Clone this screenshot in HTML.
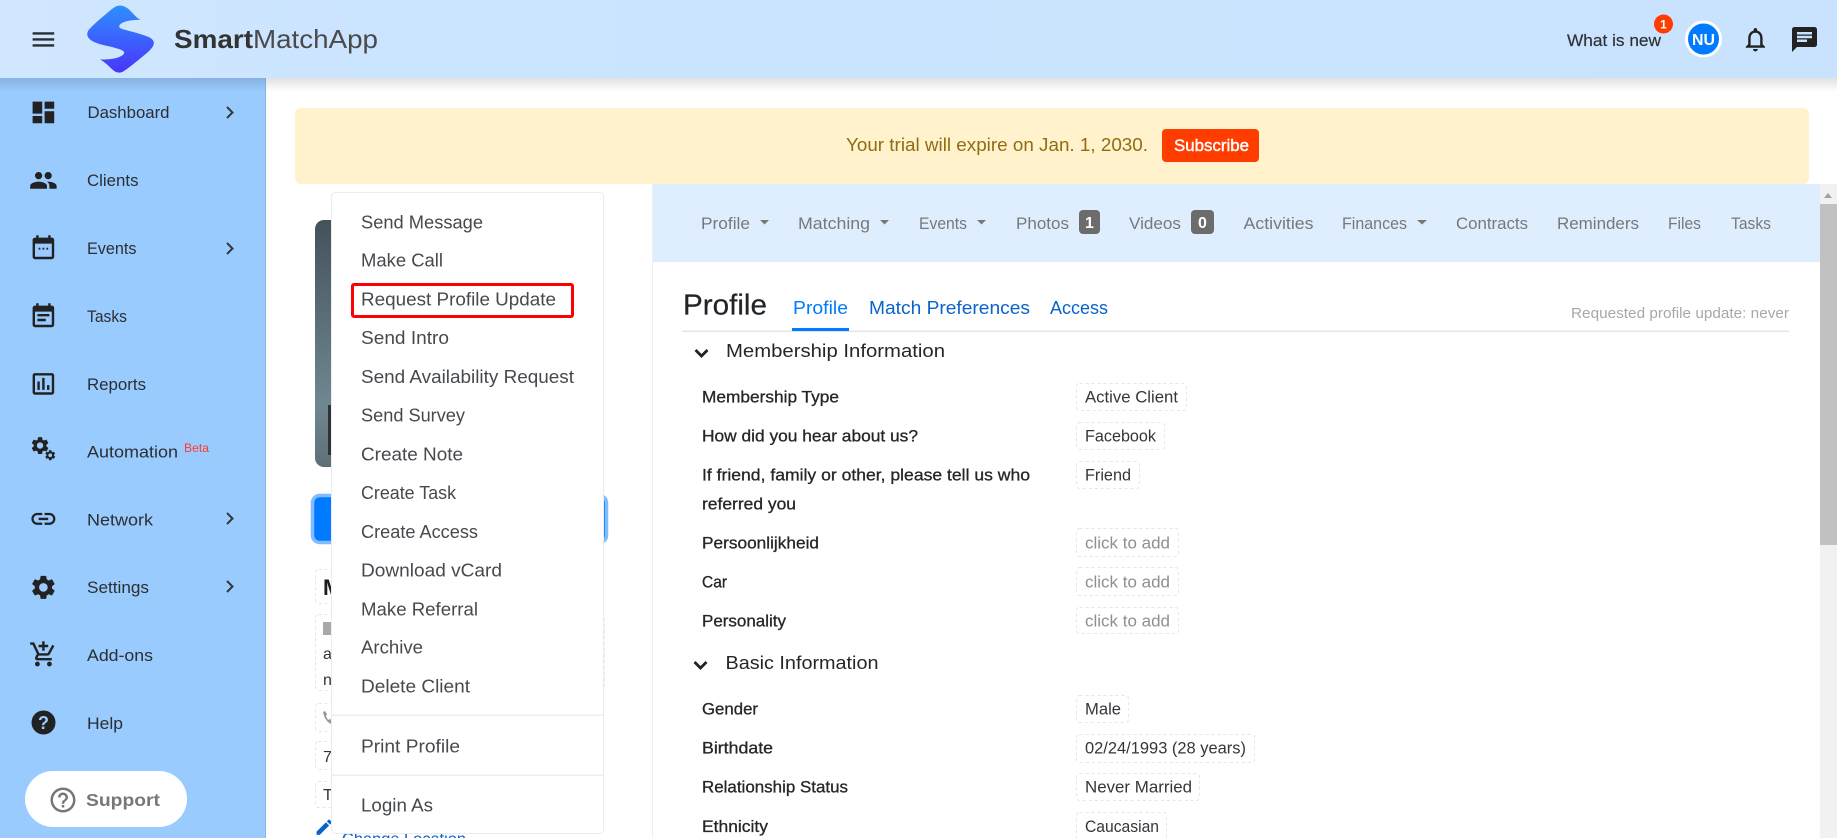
<!DOCTYPE html>
<html lang="en"><head><meta charset="utf-8"><title>SmartMatchApp</title>
<style>
html,body{margin:0;padding:0;background:#fff;overflow:hidden}
svg{display:block}
text{font-family:"Liberation Sans",sans-serif}
.s{font-size:17px;fill:#2b2f33}
.m{font-size:18.5px;fill:#464a4e}
.n{font-size:17px;fill:#787878}
.l{font-size:16.5px;fill:#24272a;stroke:#24272a;stroke-width:.3px}
.v{font-size:16.5px;fill:#33373b}
.c{font-size:16.5px;fill:#8f8f8f}
.i{fill:#222}
.b{fill:#fff;stroke:#e6e6e6;stroke-dasharray:3 3}
</style></head><body>
<svg xmlns="http://www.w3.org/2000/svg" width="1837" height="838" viewBox="0 0 1837 838">
<defs>
<linearGradient id="hd" x1="0" x2="1" y1="0" y2="0"><stop offset="0" stop-color="#d1e7ff"/><stop offset=".2" stop-color="#cbe4ff"/><stop offset="1" stop-color="#c9e3fe"/></linearGradient>
<linearGradient id="sh" x1="0" x2="0" y1="0" y2="1"><stop offset="0" stop-color="#000" stop-opacity=".12"/><stop offset="1" stop-color="#000" stop-opacity="0"/></linearGradient>
<linearGradient id="lg" x1="0" x2="0" y1="0" y2="1"><stop offset="0" stop-color="#2d90ff"/><stop offset="1" stop-color="#4a35fb"/></linearGradient>
<linearGradient id="ph" x1="0" x2="0" y1="0" y2="1"><stop offset="0" stop-color="#44525a"/><stop offset=".75" stop-color="#6f8791"/><stop offset="1" stop-color="#5f6f76"/></linearGradient>
<path id="gear" d="M19.14 12.94c.04-.3.06-.61.06-.94 0-.32-.02-.64-.07-.94l2.03-1.58c.18-.14.23-.41.12-.61l-1.92-3.32c-.12-.22-.37-.29-.59-.22l-2.39.96c-.5-.38-1.03-.7-1.62-.94l-.36-2.54c-.04-.24-.24-.41-.48-.41h-3.84c-.24 0-.43.17-.47.41l-.36 2.54c-.59.24-1.13.57-1.62.94l-2.39-.96c-.22-.08-.47 0-.59.22L2.74 8.87c-.12.21-.08.47.12.61l2.03 1.58c-.05.3-.09.63-.09.94s.02.64.07.94l-2.03 1.58c-.18.14-.23.41-.12.61l1.92 3.32c.12.22.37.29.59.22l2.39-.96c.5.38 1.03.7 1.62.94l.36 2.54c.05.24.24.41.48.41h3.84c.24 0 .44-.17.47-.41l.36-2.54c.59-.24 1.13-.56 1.62-.94l2.39.96c.22.08.47 0 .59-.22l1.92-3.32c.12-.22.07-.47-.12-.61l-2.01-1.58zM12 15.6c-1.98 0-3.6-1.62-3.6-3.6s1.62-3.6 3.6-3.6 3.6 1.62 3.6 3.6-1.62 3.6-3.6 3.6z"/>
</defs>

<!-- page -->
<rect width="1837" height="838" fill="#fff"/>

<!-- banner -->
<rect x="295" y="108" width="1514" height="76" rx="6" fill="#fff2cc"/>
<text x="846" y="151" font-size="18.5" fill="#8f6d10" textLength="302" lengthAdjust="spacingAndGlyphs">Your trial will expire on Jan. 1, 2030.</text>
<rect x="1162" y="129" width="97" height="33" rx="4" fill="#ff3d00"/>
<text x="1174" y="151" font-size="16.5" fill="#fff" stroke="#fff" stroke-width=".4" textLength="75" lengthAdjust="spacingAndGlyphs">Subscribe</text>

<!-- right panel -->
<rect x="652" y="184" width="1" height="654" fill="#efefef"/>
<rect x="653" y="184" width="1167" height="78" fill="#deeeff"/>
<rect x="1820" y="184" width="17" height="654" fill="#f1f1f1"/>
<rect x="1820" y="204" width="17" height="341" fill="#c1c1c1"/>
<path d="M1824 198l4-5 4 5z" fill="#a3a3a3"/>

<text class="n" x="701" y="229" textLength="49" lengthAdjust="spacingAndGlyphs">Profile</text>
<path d="M760 220h9l-4.500 4.500z" fill="#787878"/>
<text class="n" x="798" y="229" textLength="72" lengthAdjust="spacingAndGlyphs">Matching</text>
<path d="M880 220h9l-4.500 4.500z" fill="#787878"/>
<text class="n" x="919" y="229" textLength="48" lengthAdjust="spacingAndGlyphs">Events</text>
<path d="M977 220h9l-4.500 4.500z" fill="#787878"/>
<text class="n" x="1016" y="229" textLength="53" lengthAdjust="spacingAndGlyphs">Photos</text>
<rect x="1079" y="210" width="21" height="24" rx="4" fill="#6c6c6c"/>
<text x="1085" y="228" font-size="16" font-weight="700" fill="#fff">1</text>
<text class="n" x="1129" y="229" textLength="52" lengthAdjust="spacingAndGlyphs">Videos</text>
<rect x="1191" y="210" width="23" height="24" rx="4" fill="#6c6c6c"/>
<text x="1198" y="228" font-size="16" font-weight="700" fill="#fff">0</text>
<text class="n" x="1243.500" y="229" textLength="70" lengthAdjust="spacingAndGlyphs">Activities</text>
<text class="n" x="1342" y="229" textLength="65" lengthAdjust="spacingAndGlyphs">Finances</text>
<path d="M1417 220h10l-5 4.500z" fill="#787878"/>
<text class="n" x="1456" y="229" textLength="72" lengthAdjust="spacingAndGlyphs">Contracts</text>
<text class="n" x="1557" y="229" textLength="82" lengthAdjust="spacingAndGlyphs">Reminders</text>
<text class="n" x="1668" y="229" textLength="33" lengthAdjust="spacingAndGlyphs">Files</text>
<text class="n" x="1731" y="229" textLength="40" lengthAdjust="spacingAndGlyphs">Tasks</text>

<text x="683" y="314.500" font-size="29" fill="#212529" stroke="#212529" stroke-width=".2" textLength="84" lengthAdjust="spacingAndGlyphs">Profile</text>
<text x="793" y="314" font-size="18.500" fill="#007bff" textLength="55" lengthAdjust="spacingAndGlyphs">Profile</text>
<text x="869" y="314" font-size="18.500" fill="#0a63c9" textLength="161" lengthAdjust="spacingAndGlyphs">Match Preferences</text>
<text x="1050" y="314" font-size="18.500" fill="#0a63c9" textLength="58" lengthAdjust="spacingAndGlyphs">Access</text>
<text x="1571" y="318" font-size="14.500" fill="#a8a8a8" textLength="218" lengthAdjust="spacingAndGlyphs">Requested profile update: never</text>
<rect x="682" y="330.500" width="1107" height="1.500" fill="#e4e4e4"/>
<rect x="792" y="328" width="57" height="3" fill="#007bff"/>

<path d="M695.500 350l6 6 6-6" fill="none" stroke="#222" stroke-width="2.800"/>
<text x="726" y="357" font-size="18.500" fill="#24272a" textLength="219" lengthAdjust="spacingAndGlyphs">Membership Information</text>

<text class="l" x="702" y="397" dy="5.500" textLength="137" lengthAdjust="spacingAndGlyphs">Membership Type</text>
<text class="l" x="702" y="436" dy="5.500" textLength="216" lengthAdjust="spacingAndGlyphs">How did you hear about us?</text>
<text class="l" x="702" y="475" dy="5.500" textLength="328" lengthAdjust="spacingAndGlyphs">If friend, family or other, please tell us who</text>
<text class="l" x="702" y="504" dy="5.500" textLength="94" lengthAdjust="spacingAndGlyphs">referred you</text>
<text class="l" x="702" y="543" dy="5.500" textLength="117" lengthAdjust="spacingAndGlyphs">Persoonlijkheid</text>
<text class="l" x="702" y="582" dy="5.500" textLength="25" lengthAdjust="spacingAndGlyphs">Car</text>
<text class="l" x="702" y="621" dy="5.500" textLength="84" lengthAdjust="spacingAndGlyphs">Personality</text>

<rect class="b" x="1076.500" y="383.500" width="110" height="27" rx="3"/>
<text class="v" x="1085" y="397" dy="5.500" textLength="93" lengthAdjust="spacingAndGlyphs">Active Client</text>
<rect class="b" x="1076.500" y="422.500" width="88" height="27" rx="3"/>
<text class="v" x="1085" y="436" dy="5.500" textLength="71" lengthAdjust="spacingAndGlyphs">Facebook</text>
<rect class="b" x="1076.500" y="461.500" width="63" height="27" rx="3"/>
<text class="v" x="1085" y="475" dy="5.500" textLength="46" lengthAdjust="spacingAndGlyphs">Friend</text>
<rect class="b" x="1076.500" y="528.500" width="102" height="28" rx="3"/>
<text class="c" x="1085" y="543" dy="5.500" textLength="85" lengthAdjust="spacingAndGlyphs">click to add</text>
<rect class="b" x="1076.500" y="567.500" width="102" height="28" rx="3"/>
<text class="c" x="1085" y="582" dy="5.500" textLength="85" lengthAdjust="spacingAndGlyphs">click to add</text>
<rect class="b" x="1076.500" y="607.500" width="102" height="26" rx="3"/>
<text class="c" x="1085" y="621" dy="5.500" textLength="85" lengthAdjust="spacingAndGlyphs">click to add</text>

<path d="M694.500 662l6 6 6-6" fill="none" stroke="#222" stroke-width="2.800"/>
<text x="725.500" y="669" font-size="18.500" fill="#24272a" textLength="153" lengthAdjust="spacingAndGlyphs">Basic Information</text>

<text class="l" x="702" y="709" dy="5.500" textLength="56" lengthAdjust="spacingAndGlyphs">Gender</text>
<text class="l" x="702" y="748" dy="5.500" textLength="71" lengthAdjust="spacingAndGlyphs">Birthdate</text>
<text class="l" x="702" y="787" dy="5.500" textLength="146" lengthAdjust="spacingAndGlyphs">Relationship Status</text>
<text class="l" x="702" y="826.500" dy="5.500" textLength="66" lengthAdjust="spacingAndGlyphs">Ethnicity</text>

<rect class="b" x="1076.500" y="695.500" width="52" height="27" rx="3"/>
<text class="v" x="1085" y="709" dy="5.500" textLength="36" lengthAdjust="spacingAndGlyphs">Male</text>
<rect class="b" x="1076.500" y="734.500" width="178" height="28" rx="3"/>
<text class="v" x="1085" y="748" dy="5.500" textLength="161" lengthAdjust="spacingAndGlyphs">02/24/1993 (28 years)</text>
<rect class="b" x="1076.500" y="773.500" width="123" height="27" rx="3"/>
<text class="v" x="1085" y="787" dy="5.500" textLength="107" lengthAdjust="spacingAndGlyphs">Never Married</text>
<rect class="b" x="1076.500" y="812.500" width="90" height="32" rx="3"/>
<text class="v" x="1085" y="826.500" dy="5.500" textLength="74" lengthAdjust="spacingAndGlyphs">Caucasian</text>

<!-- left column, behind menu -->
<rect x="315" y="220" width="289" height="247" rx="9" fill="url(#ph)"/>
<rect x="328" y="405" width="4" height="50" fill="#2f3336"/>
<rect x="312.500" y="495.500" width="294" height="47" rx="7" fill="#007bff" stroke="#80bdff" stroke-width="3.500"/>
<rect class="b" x="315.500" y="569.500" width="40" height="34" rx="3"/>
<text x="323" y="595" font-size="22" font-weight="700" fill="#1d1d1d">M</text>
<rect class="b" x="315.500" y="614.500" width="289" height="76" rx="3"/>
<rect x="323" y="622" width="12" height="13" fill="#a8a8a8"/>
<text x="323" y="659" font-size="16" fill="#333">a</text>
<text x="323" y="685" font-size="16" fill="#333">n</text>
<rect class="b" x="315.500" y="703.500" width="40" height="28" rx="3"/>
<path d="M323 712c1 6 4 10 8 12l2-3-3-2-2 1-2-4 1-2-2-3z" fill="#999"/>
<rect class="b" x="315.500" y="741.500" width="40" height="28" rx="3"/>
<text x="323" y="762" font-size="16" fill="#333">7</text>
<rect class="b" x="315.500" y="781.500" width="40" height="26" rx="3"/>
<text x="323" y="800" font-size="16" fill="#333">T</text>
<path transform="translate(314 817) scale(.85)" d="M3 17.250V21h3.750L17.810 9.940l-3.750-3.750L3 17.250zM20.710 7.040c.39-.39.39-1.020 0-1.410l-2.340-2.340c-.39-.39-1.020-.39-1.410 0l-1.830 1.830 3.750 3.750 1.830-1.830z" fill="#0a63c9"/>
<text x="342" y="844" font-size="16" fill="#0a63c9" textLength="124" lengthAdjust="spacingAndGlyphs">Change Location</text>

<!-- dropdown menu -->
<rect x="331.500" y="192.500" width="272" height="641" rx="4" fill="#fff" stroke="#ececec"/>
<text class="m" x="361" y="228.500" textLength="122" lengthAdjust="spacingAndGlyphs">Send Message</text>
<text class="m" x="361" y="266.500" textLength="82" lengthAdjust="spacingAndGlyphs">Make Call</text>
<text class="m" x="361" y="305.500" textLength="195" lengthAdjust="spacingAndGlyphs">Request Profile Update</text>
<text class="m" x="361" y="344" textLength="88" lengthAdjust="spacingAndGlyphs">Send Intro</text>
<text class="m" x="361" y="383" textLength="213" lengthAdjust="spacingAndGlyphs">Send Availability Request</text>
<text class="m" x="361" y="421.500" textLength="104" lengthAdjust="spacingAndGlyphs">Send Survey</text>
<text class="m" x="361" y="460.500" textLength="102" lengthAdjust="spacingAndGlyphs">Create Note</text>
<text class="m" x="361" y="499" textLength="95" lengthAdjust="spacingAndGlyphs">Create Task</text>
<text class="m" x="361" y="538" textLength="117" lengthAdjust="spacingAndGlyphs">Create Access</text>
<text class="m" x="361" y="576.500" textLength="141" lengthAdjust="spacingAndGlyphs">Download vCard</text>
<text class="m" x="361" y="615.500" textLength="117" lengthAdjust="spacingAndGlyphs">Make Referral</text>
<text class="m" x="361" y="653.500" textLength="62" lengthAdjust="spacingAndGlyphs">Archive</text>
<text class="m" x="361" y="692.500" textLength="109" lengthAdjust="spacingAndGlyphs">Delete Client</text>
<rect x="332" y="714.500" width="271" height="1.500" fill="#eee"/>
<text class="m" x="361" y="752.500" textLength="99" lengthAdjust="spacingAndGlyphs">Print Profile</text>
<rect x="332" y="774.500" width="271" height="1.500" fill="#eee"/>
<text class="m" x="361" y="811.500" textLength="72" lengthAdjust="spacingAndGlyphs">Login As</text>
<rect x="352.500" y="284.500" width="220" height="32" rx="1.500" fill="none" stroke="#f00" stroke-width="3"/>

<!-- sidebar -->
<rect x="0" y="78" width="265" height="760" fill="#99cbff"/>
<rect x="265" y="78" width="1" height="760" fill="#86b6e6"/>

<path class="i" transform="translate(29 98) scale(1.200)" d="M3 13h8V3H3v10zm0 8h8v-6H3v6zm10 0h8V11h-8v10zm0-18v6h8V3h-8z"/>
<text class="s" x="87.500" y="118" textLength="82" lengthAdjust="spacingAndGlyphs">Dashboard</text>
<path d="M227 107l5.500 5.500-5.500 5.500" fill="none" stroke="#33373b" stroke-width="2"/>

<path class="i" transform="translate(29 166) scale(1.200)" d="M16 11c1.660 0 2.990-1.340 2.990-3S17.660 5 16 5c-1.660 0-3 1.340-3 3s1.340 3 3 3zm-8 0c1.660 0 2.990-1.340 2.990-3S9.660 5 8 5C6.340 5 5 6.340 5 8s1.340 3 3 3zm0 2c-2.330 0-7 1.170-7 3.500V19h14v-2.500c0-2.330-4.670-3.500-7-3.500zm8 0c-.29 0-.62.02-.97.05 1.160.84 1.970 1.970 1.970 3.450V19h6v-2.500c0-2.330-4.670-3.500-7-3.500z"/>
<text class="s" x="87" y="186" textLength="51.500" lengthAdjust="spacingAndGlyphs">Clients</text>

<path class="i" transform="translate(29 234) scale(1.200)" d="M19 3h-1V1h-2v2H8V1H6v2H5C3.900 3 3 3.900 3 5v14c0 1.100.9 2 2 2h14c1.100 0 2-.9 2-2V5c0-1.100-.9-2-2-2zm0 16H5V8h14v11zM8 11.500H9.500V13H8zM11.250 11.500h1.500V13h-1.500zM14.500 11.500H16V13h-1.500z"/>
<text class="s" x="87" y="254" textLength="49.500" lengthAdjust="spacingAndGlyphs">Events</text>
<path d="M227 243l5.500 5.500-5.500 5.500" fill="none" stroke="#33373b" stroke-width="2"/>

<path class="i" transform="translate(29 302) scale(1.200)" d="M17 10H7v2h10v-2zm2-7h-1V1h-2v2H8V1H6v2H5c-1.110 0-1.990.9-1.990 2L3 19c0 1.100.89 2 2 2h14c1.100 0 2-.9 2-2V5c0-1.100-.9-2-2-2zm0 16H5V8h14v11zm-5-5H7v2h7v-2z"/>
<text class="s" x="87" y="322" textLength="40" lengthAdjust="spacingAndGlyphs">Tasks</text>

<path class="i" transform="translate(29 369.500) scale(1.200)" d="M19 3H5c-1.100 0-2 .9-2 2v14c0 1.100.9 2 2 2h14c1.100 0 2-.9 2-2V5c0-1.100-.9-2-2-2zm0 16H5V5h14v14zM7 10h2v7H7zm4-3h2v10h-2zm4 6h2v4h-2z"/>
<text class="s" x="87" y="390" textLength="59" lengthAdjust="spacingAndGlyphs">Reports</text>

<use href="#gear" class="i" transform="translate(29.500 435) scale(.88)"/>
<use href="#gear" class="i" transform="translate(44 449) scale(.52)"/>
<text class="s" x="87" y="457.500" textLength="91" lengthAdjust="spacingAndGlyphs">Automation</text>
<text x="184" y="452" font-size="12" fill="#ff3b30" textLength="25" lengthAdjust="spacingAndGlyphs">Beta</text>

<path class="i" transform="translate(29 504.500) scale(1.200)" d="M3.900 12c0-1.710 1.390-3.100 3.100-3.100h4V7H7c-2.760 0-5 2.240-5 5s2.240 5 5 5h4v-1.900H7c-1.710 0-3.100-1.390-3.100-3.100zM8 13h8v-2H8v2zm9-6h-4v1.900h4c1.710 0 3.100 1.390 3.100 3.100s-1.390 3.100-3.100 3.100h-4V17h4c2.760 0 5-2.240 5-5s-2.240-5-5-5z"/>
<text class="s" x="87" y="525.500" textLength="66" lengthAdjust="spacingAndGlyphs">Network</text>
<path d="M227 513l5.500 5.500-5.500 5.500" fill="none" stroke="#33373b" stroke-width="2"/>

<use href="#gear" class="i" transform="translate(29 573) scale(1.200)"/>
<text class="s" x="87" y="593" textLength="62" lengthAdjust="spacingAndGlyphs">Settings</text>
<path d="M227 581l5.500 5.500-5.500 5.500" fill="none" stroke="#33373b" stroke-width="2"/>

<path class="i" transform="translate(29 640) scale(1.200)" d="M11 9h2V6h3V4h-3V1h-2v3H8v2h3v3zm-4 9c-1.100 0-1.990.9-1.990 2S5.900 22 7 22s2-.9 2-2-.9-2-2-2zm10 0c-1.100 0-1.990.9-1.990 2s.89 2 1.990 2 2-.9 2-2-.9-2-2-2zm-9.830-3.250l.03-.12.9-1.630h7.450c.75 0 1.410-.41 1.750-1.030l3.860-7.010L19.420 4h-.01l-1.100 2-2.760 5H8.530l-.13-.27L6.160 6l-.95-2-.94-2H1v2h2l3.600 7.590-1.350 2.450c-.16.28-.25.61-.25.960 0 1.100.9 2 2 2h12v-2H7.420c-.13 0-.25-.11-.25-.25z"/>
<text class="s" x="87" y="661" textLength="66" lengthAdjust="spacingAndGlyphs">Add-ons</text>

<circle cx="43.500" cy="722.500" r="12" fill="#222"/>
<text x="43.500" y="729" font-size="18" font-weight="700" fill="#99cbff" text-anchor="middle">?</text>
<text class="s" x="87" y="729" textLength="36" lengthAdjust="spacingAndGlyphs">Help</text>

<rect x="25" y="771" width="162" height="56" rx="28" fill="#fff"/>
<path fill="#777" transform="translate(48 785) scale(1.250)" d="M11 18h2v-2h-2v2zm1-16C6.480 2 2 6.480 2 12s4.480 10 10 10 10-4.480 10-10S17.520 2 12 2zm0 18c-4.410 0-8-3.590-8-8s3.590-8 8-8 8 3.590 8 8-3.590 8-8 8zm0-14c-2.210 0-4 1.790-4 4h2c0-1.100.9-2 2-2s2 .9 2 2c0 2-3 1.750-3 5h2c0-2.250 3-2.500 3-5 0-2.210-1.790-4-4-4z"/>
<text x="86" y="806" font-size="17.500" font-weight="700" fill="#777" textLength="74" lengthAdjust="spacingAndGlyphs">Support</text>

<!-- header -->
<rect x="0" y="78" width="1837" height="14" fill="url(#sh)"/>
<rect width="1837" height="78" fill="url(#hd)"/>
<path fill="#2a2d30" transform="translate(29 25) scale(1.200)" d="M3 18h18v-2H3v2zm0-5h18v-2H3v2zm0-7v2h18V6H3z"/>
<path fill="url(#lg)" d="M120 5.500C124 5.500 128 8 131 11.500C134 14.500 137 18 140.500 20C134 19.500 127 20.500 122 23C118.500 25 118 27.500 122 29C129 31 138 33 146 36C152 38 155 41 153.500 45C152 49 147 53 142 57C136 62 130 67 124 71C120 73.500 116.500 73 113 70C109 66.500 105 62 100 59.500C105 59.500 112 59.500 118 57.500C122 56 125 54 124 52C122.500 49.500 117 48.500 112 47C105 45.500 96 43.500 91.500 40.500C86.500 37 86 33 89.500 29C94 24 100 19 106 14C111 10 115 5.500 120 5.500Z"/>
<text x="174" y="48" font-size="26" font-weight="700" fill="#333" textLength="79" lengthAdjust="spacingAndGlyphs">Smart</text>
<text x="253" y="48" font-size="26" fill="#4a4a4a" textLength="125" lengthAdjust="spacingAndGlyphs">MatchApp</text>

<text x="1567" y="46" font-size="17" fill="#2f3235" stroke="#2f3235" stroke-width=".2" textLength="94" lengthAdjust="spacingAndGlyphs">What is new</text>
<circle cx="1663.500" cy="24" r="9.500" fill="#ff3d00"/>
<text x="1663.500" y="28.500" font-size="12" font-weight="700" fill="#fff" text-anchor="middle">1</text>
<circle cx="1703.500" cy="39" r="17" fill="#007bff" stroke="#fff" stroke-width="3"/>
<text x="1703.500" y="45" font-size="16" font-weight="700" fill="#fff" text-anchor="middle" textLength="23" lengthAdjust="spacingAndGlyphs">NU</text>
<path fill="#222" transform="translate(1741 25) scale(1.200)" d="M12 22c1.100 0 2-.9 2-2h-4c0 1.100.9 2 2 2zm6-6v-5c0-3.070-1.630-5.640-4.500-6.320V4c0-.83-.67-1.500-1.500-1.500s-1.500.67-1.500 1.500v.68C7.640 5.360 6 7.920 6 11v5l-2 2v1h16v-1l-2-2zm-2 1H8v-6c0-2.480 1.510-4.500 4-4.500s4 2.020 4 4.500v6z"/>
<path fill="#222" transform="translate(1789.500 24.500) scale(1.250)" d="M20 2H4c-1.100 0-1.990.9-1.990 2L2 22l4-4h14c1.100 0 2-.9 2-2V4c0-1.100-.9-2-2-2zM6 9h12v2H6V9zm8 5H6v-2h8v2zm4-6H6V6h12v2z"/>
</svg>
</body></html>
